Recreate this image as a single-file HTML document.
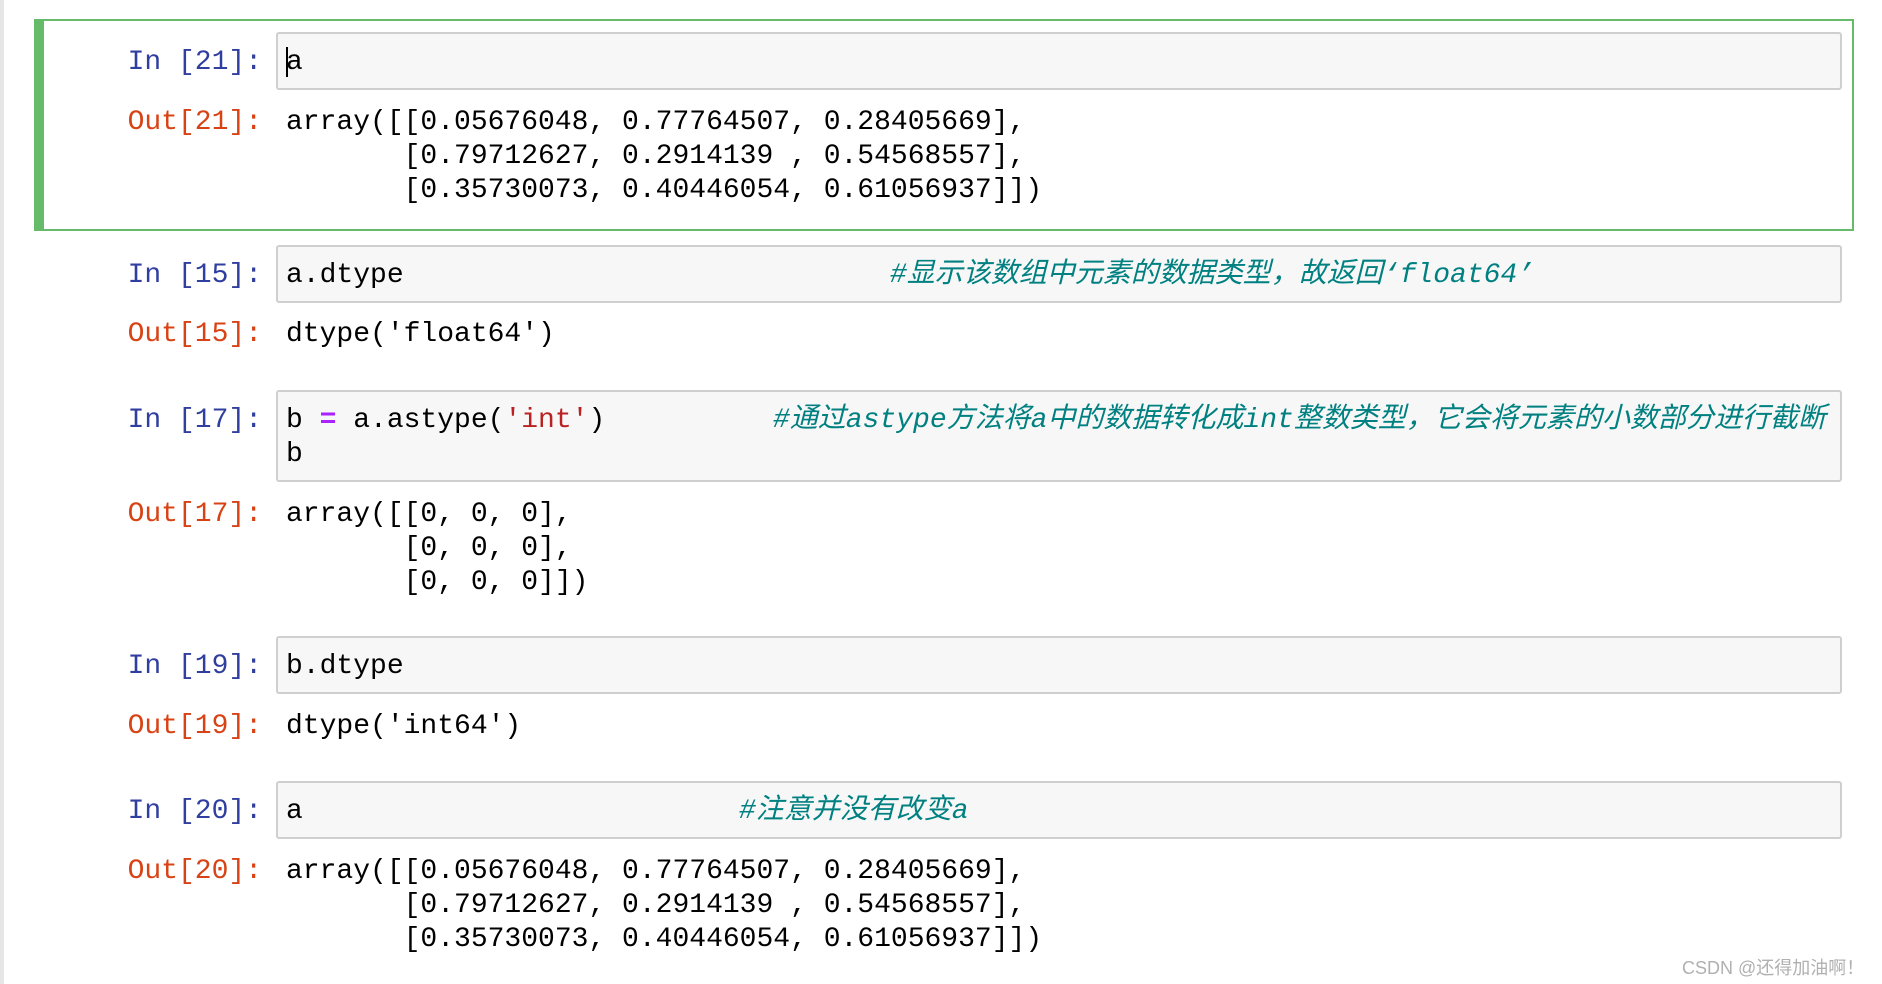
<!DOCTYPE html>
<html><head><meta charset="utf-8"><style>
body{margin:0;width:1882px;height:984px;background:#fff;position:relative;overflow:hidden;font-family:"Liberation Mono","Noto Sans CJK SC",monospace;font-size:28px;}
.l{position:absolute;line-height:34px;white-space:pre;color:#000;margin-top:3px;}
.in{color:#303F9F;}
.out{color:#D84315;}
.p{right:1620px;text-align:right;}
.box{position:absolute;left:276px;width:1566px;background:#f7f7f7;border:2px solid #cfcfcf;border-radius:3px;box-sizing:border-box;}
.c{color:#008080;font-style:italic;}
.eq{color:#AA22FF;font-weight:bold;}
.s{color:#BA2121;}
</style></head><body>
<div style="position:absolute;left:0;top:0;width:4px;height:984px;background:#e6e6e6"></div>
<div style="position:absolute;left:34px;top:19px;width:1820px;height:212px;border:2px solid #66bb6a;border-left:10px solid #66bb6a;box-sizing:border-box"></div>

<div class="box" style="top:32px;height:58px"></div>
<div class="l in p" style="top:43px">In [21]:</div>
<div class="l" style="left:286px;top:43px">a</div>
<div style="position:absolute;left:286px;top:47px;width:2px;height:30px;background:#000"></div>
<div class="l out p" style="top:103px">Out[21]:</div>
<div class="l" style="left:286px;top:103px">array([[0.05676048, 0.77764507, 0.28405669],
       [0.79712627, 0.2914139 , 0.54568557],
       [0.35730073, 0.40446054, 0.61056937]])</div>

<div class="box" style="top:245px;height:58px"></div>
<div class="l in p" style="top:256px">In [15]:</div>
<div class="l" style="left:286px;top:256px">a.dtype</div>
<div class="l c" style="left:890px;top:256px">#显示该数组中元素的数据类型，故返回‘float64’</div>
<div class="l out p" style="top:315px">Out[15]:</div>
<div class="l" style="left:286px;top:315px">dtype('float64')</div>

<div class="box" style="top:390px;height:92px"></div>
<div class="l in p" style="top:401px">In [17]:</div>
<div class="l" style="left:286px;top:401px">b <span class="eq">=</span> a.astype(<span class="s">'int'</span>)
b</div>
<div class="l c" style="left:773px;top:401px">#通过astype方法将a中的数据转化成int整数类型，它会将元素的小数部分进行截断</div>
<div class="l out p" style="top:495px">Out[17]:</div>
<div class="l" style="left:286px;top:495px">array([[0, 0, 0],
       [0, 0, 0],
       [0, 0, 0]])</div>

<div class="box" style="top:636px;height:58px"></div>
<div class="l in p" style="top:647px">In [19]:</div>
<div class="l" style="left:286px;top:647px">b.dtype</div>
<div class="l out p" style="top:707px">Out[19]:</div>
<div class="l" style="left:286px;top:707px">dtype('int64')</div>

<div class="box" style="top:781px;height:58px"></div>
<div class="l in p" style="top:792px">In [20]:</div>
<div class="l" style="left:286px;top:792px">a</div>
<div class="l c" style="left:739px;top:792px">#注意并没有改变a</div>
<div class="l out p" style="top:852px">Out[20]:</div>
<div class="l" style="left:286px;top:852px">array([[0.05676048, 0.77764507, 0.28405669],
       [0.79712627, 0.2914139 , 0.54568557],
       [0.35730073, 0.40446054, 0.61056937]])</div>

<div style="position:absolute;left:1682px;top:954px;font-family:'Liberation Sans','Noto Sans CJK SC',sans-serif;font-size:18px;color:#b0b0b0;white-space:nowrap">CSDN @还得加油啊！</div>
</body></html>
